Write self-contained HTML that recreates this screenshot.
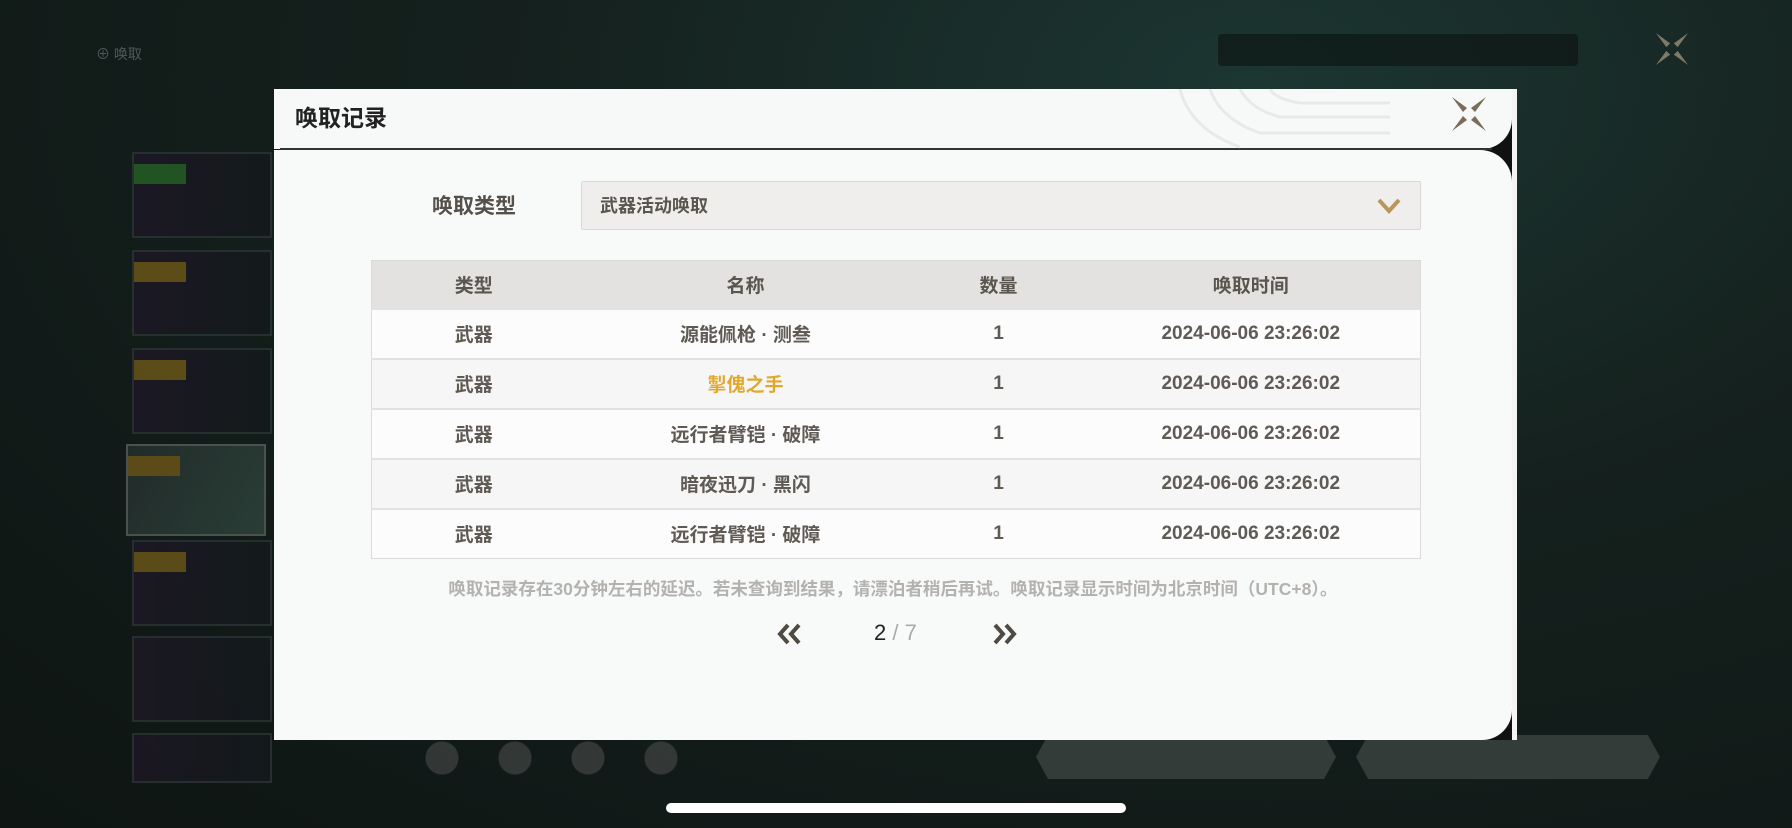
<!DOCTYPE html>
<html><head><meta charset="utf-8"><style>
*{margin:0;padding:0;box-sizing:border-box}
body{width:1792px;height:828px;overflow:hidden;position:relative;font-family:"Liberation Sans","Noto Sans CJK SC",sans-serif;
background:radial-gradient(ellipse at 70% 10%,#1c3632 0%,#15211e 40%,#0e1513 100%);}
.bgcard{position:absolute;left:132px;width:140px;height:86px;border:2px solid #2c3533;background:linear-gradient(90deg,#1e1826,#141a1c);opacity:.8}
.tag{position:absolute;left:0;top:10px;width:52px;height:20px;background:#6e5818}
.p{position:absolute}
.modal-line{position:absolute;left:1512px;top:89px;width:5px;height:651px;background:#f4f4f4}
.black{position:absolute;left:1470px;top:89px;width:44px;height:651px;background:#111}
.head{position:absolute;left:274px;top:89px;width:1238px;height:60px;background:#f7f8f8;border-bottom-right-radius:30px}
.hline{position:absolute;left:280px;top:148px;width:1212px;height:2px;background:#333}
.body{position:absolute;left:274px;top:150px;width:1238px;height:590px;background:#f8f9f9;border-top-right-radius:32px;border-bottom-right-radius:30px}
.title{position:absolute;left:295px;top:104px;font-size:23px;font-weight:bold;color:#222;line-height:28px}
.lbl{position:absolute;left:432px;top:193px;font-size:21px;font-weight:bold;color:#555049;line-height:28px}
.dd{position:absolute;left:581px;top:181px;width:840px;height:49px;background:#efeeec;border:1px solid #d9d8d5;border-radius:2px}
.dd span{position:absolute;left:18px;top:12px;font-size:18px;font-weight:bold;color:#5a554e;line-height:24px}
table{position:absolute;left:371px;top:260px;width:1050px;border-collapse:collapse;border:1px solid #dadad8;background:#fcfcfc}
th{height:48px;background:#e3e2e0;font-size:19px;color:#5a554e;font-weight:bold}
td{height:50px;border-top:2px solid #e2e2e2;text-align:center;font-size:19px;color:#5f5a54;font-weight:bold}
tr:nth-child(odd) td{background:#f6f6f6}
.note{position:absolute;left:0;width:1786px;text-align:center;top:577px;font-size:17.5px;color:#b4b2af;line-height:24px;font-weight:bold}
.pg{position:absolute;top:618px;font-size:22px;line-height:30px}
.home{position:absolute;left:666px;top:803px;width:460px;height:10px;background:#fff;border-radius:5px}
</style></head><body>
<div class="p" style="left:96px;top:44px;color:#4f5a58;font-size:14px">⊕ 唤取</div>
<div class="p" style="left:1218px;top:34px;width:360px;height:32px;background:#0c1211;border-radius:4px;opacity:.6"></div>
<svg class="p" style="left:1655px;top:32px" width="34" height="34" viewBox="0 0 36 36"><g fill="#7e7a6a"><path d="M1 1 L16 12 L12 16 Z"/><path d="M35 1 L24 16 L20 12 Z"/><path d="M1 35 L12 20 L16 24 Z"/><path d="M35 35 L20 24 L24 20 Z"/></g></svg>
<div class="bgcard" style="top:152px"><div class="tag" style="background:#256225"></div></div>
<div class="bgcard" style="top:250px"><div class="tag"></div></div>
<div class="bgcard" style="top:348px"><div class="tag"></div></div>
<div class="bgcard" style="top:444px;left:126px;height:92px;border-color:#5a605c;background:linear-gradient(120deg,#26302e,#30463f)"><div class="tag"></div></div>
<div class="bgcard" style="top:540px"><div class="tag"></div></div>
<div class="bgcard" style="top:636px"></div>
<div class="bgcard" style="top:733px;height:50px"></div>
<div class="p" style="left:1036px;top:735px;width:300px;height:44px;background:#343c3a;clip-path:polygon(4% 0,96% 0,100% 50%,96% 100%,4% 100%,0 50%)"></div>
<div class="p" style="left:1356px;top:735px;width:304px;height:44px;background:#343c3a;clip-path:polygon(4% 0,96% 0,100% 50%,96% 100%,4% 100%,0 50%)"></div>
<div class="p" style="left:424px;top:740px;width:260px;height:36px;background:radial-gradient(circle at 18px 18px,#555 16px,transparent 17px) 0 0/73px 36px repeat-x;opacity:.5"></div>

<div class="black"></div>
<div class="modal-line"></div>
<div class="head"></div>
<div class="body"></div>
<div class="hline"></div>
<svg class="p" style="left:1150px;top:89px" width="340" height="60"><g fill="none" stroke="#e8eae8" stroke-width="3"><path d="M30 0 Q40 40 90 58"/><path d="M60 0 Q70 30 110 44 L240 44"/><path d="M90 0 Q100 20 130 28 L240 28"/><path d="M120 0 Q125 10 150 14 L240 14"/></g></svg>
<div class="title">唤取记录</div>
<svg class="p" style="left:1451px;top:96px" width="36" height="36" viewBox="0 0 36 36"><g fill="#7a6d58"><path d="M1 1 L16 12 L12 16 Z"/><path d="M35 1 L24 16 L20 12 Z"/><path d="M1 35 L12 20 L16 24 Z"/><path d="M35 35 L20 24 L24 20 Z"/></g></svg>

<div class="lbl">唤取类型</div>
<div class="dd"><span>武器活动唤取</span>
<svg class="p" style="left:795px;top:16px" width="24" height="16" viewBox="0 0 24 16"><path d="M2 2 L12 13 L22 2" fill="none" stroke="#b8975a" stroke-width="4"/></svg></div>

<table>
<tr><th style="width:204px">类型</th><th style="width:340px">名称</th><th style="width:166px">数量</th><th>唤取时间</th></tr>
<tr><td>武器</td><td>源能佩枪 · 测叁</td><td>1</td><td>2024-06-06 23:26:02</td></tr>
<tr><td>武器</td><td style="color:#e0a92c">掣傀之手</td><td>1</td><td>2024-06-06 23:26:02</td></tr>
<tr><td>武器</td><td>远行者臂铠 · 破障</td><td>1</td><td>2024-06-06 23:26:02</td></tr>
<tr><td>武器</td><td>暗夜迅刀 · 黑闪</td><td>1</td><td>2024-06-06 23:26:02</td></tr>
<tr><td>武器</td><td>远行者臂铠 · 破障</td><td>1</td><td>2024-06-06 23:26:02</td></tr>
</table>
<div class="note">唤取记录存在30分钟左右的延迟。若未查询到结果，请漂泊者稍后再试。唤取记录显示时间为北京时间（UTC+8）。</div>
<svg class="p" style="left:775px;top:623px" width="28" height="22" viewBox="0 0 28 22"><path d="M13 2 L5 11 L13 20 M24 2 L16 11 L24 20" fill="none" stroke="#4f4a42" stroke-width="4"/></svg>
<div class="pg" style="left:874px"><span style="color:#222">2</span> <span style="color:#aaa">/ 7</span></div>
<svg class="p" style="left:991px;top:623px" width="28" height="22" viewBox="0 0 28 22"><path d="M4 2 L12 11 L4 20 M15 2 L23 11 L15 20" fill="none" stroke="#4f4a42" stroke-width="4"/></svg>
<div class="home"></div>
</body></html>
